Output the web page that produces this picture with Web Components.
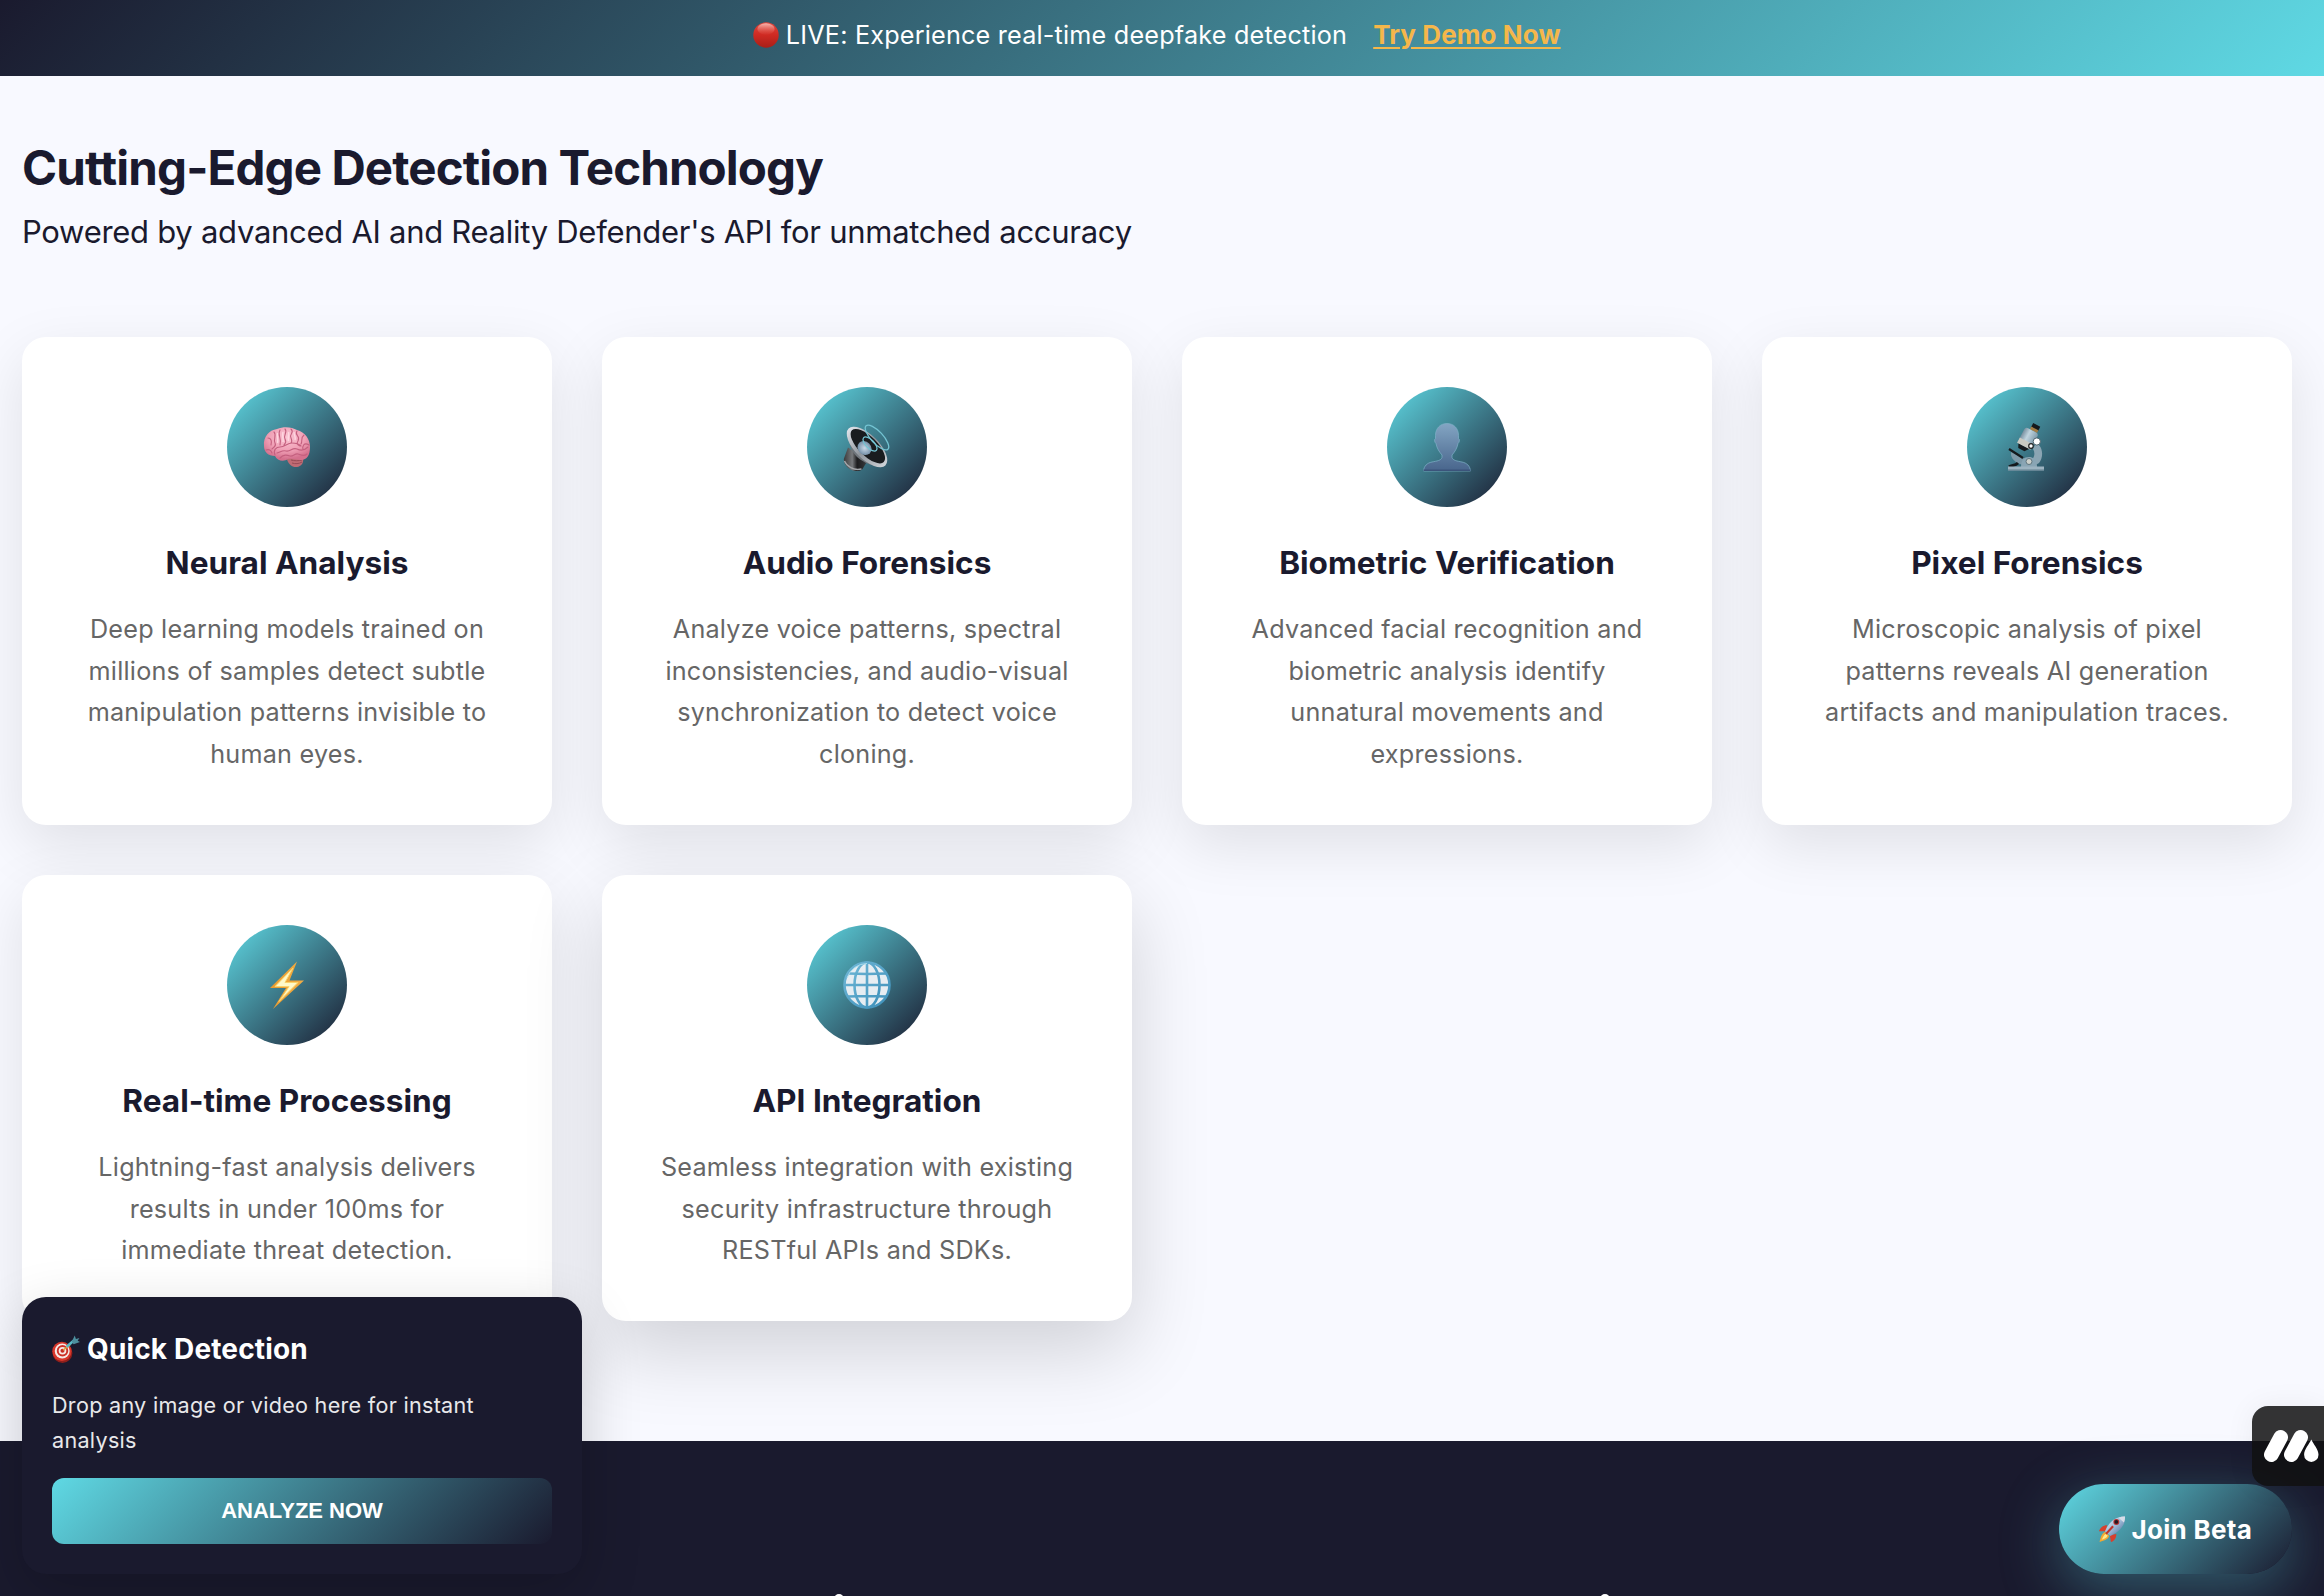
<!DOCTYPE html>
<html lang="en">
<head>
<meta charset="utf-8">
<title>Cutting-Edge Detection Technology</title>
<style>
html,body{margin:0;height:1596px;overflow:hidden}
body{background:#f8f9ff;color:#1a1a2e;font-family:Inter,"Noto Sans",sans-serif;--grad:linear-gradient(135deg,#5fd9e4 0%,#1a1a2e 100%)}
</style>
</head>
<body>
<detect-page></detect-page>
<script>
const ICONS={
dot:`<defs><linearGradient id="a" x2="0" y2="1"><stop stop-color="#e0463c"/><stop offset=".5" stop-color="#cf2a22"/><stop offset="1" stop-color="#a81f18"/></linearGradient><linearGradient id="b" x2="0" y2="1"><stop stop-color="#f6b5ae"/><stop offset="1" stop-color="#e0564c" stop-opacity=".1"/></linearGradient></defs><circle cx="24" cy="24" r="23.5" fill="url(#a)"/><ellipse cx="24" cy="13" rx="16" ry="10.5" fill="url(#b)"/>`,
brain:`<defs><radialGradient id="a" cx=".5" cy=".3" r=".65"><stop stop-color="#fbc6d4"/><stop offset=".6" stop-color="#f0a0b6"/><stop offset="1" stop-color="#d4708d"/></radialGradient></defs><path d="M24 36c1 5 5 8.500 10 8 4-.5 7-4 6-9l-8-3z" fill="#bf6b74"/><path d="M28 37c3 1 8 1 11 0M29 40c3 1 7 1 10-1" stroke="#974b57" fill="none"/><path d="M1 23C0 14 6 7 14 6c7-3 15-2 20 1 8 2 13 9 13 17 0 8-3 13-9 13-5 0-9-2-13-1-4 3-11 2-13-3C5 33 1 29 1 23z" fill="url(#a)"/><g fill="none" stroke="#c4607f" stroke-width="1.100" stroke-linecap="round"><path d="M12 32c-2-5 1-8 5-8 5 0 7-4 12-4 4 0 7 1 9 3M5 15c3 0 4 3 3 7M11 9c3 3-1 7 1 11s-2 4-3 6M17 7c-3 5 2 8 0 15M22 6c3 3-2 6 0 10s0 4-1 6M28 6c4 4-2 4 0 9s0 3 0 5M34 8c-3 5 4 4 1 10-2 3 0 4 2 5M41 12c-4 3-1 6-3 9M46 22c-5-3-7 1-6 5M14 30c4-1 5-3 9-2 5 1 6-4 11-2 4 2 8 1 11-2M17 35c4-4 7-3 10-2s5-3 8-2 6 3 9 0M3 27c3-1 5 0 6 3"/></g><g fill="none" stroke="#ffdce5" stroke-width="1.400" opacity=".85"><path d="M14.500 10c-1 3 1 6 0 10M20 9c-1 3 .5 6 0 10M25.500 9c1 4-1 5 0 9M31 9c0 4 2 4 1 8"/></g>`,
audio:`<defs><linearGradient id="a"><stop stop-color="#3a3a3a"/><stop offset=".35" stop-color="#77797c"/><stop offset=".55" stop-color="#1c1c1e"/><stop offset="1" stop-color="#3b3d40"/></linearGradient><linearGradient id="b"><stop stop-color="#dfe3ea"/><stop offset=".5" stop-color="#8e949b"/><stop offset="1" stop-color="#cfd3d8"/></linearGradient><radialGradient id="c"><stop stop-color="#c9d9e8"/><stop offset="1" stop-color="#7590a8"/></radialGradient></defs><path d="M5 24.500 .8 36c0 5 4 10 9 11.500 4 1.200 8 .5 9.700-1.500L25 37z" fill="url(#a)"/><path d="M1.500 38c2 5 9 10 17 8" stroke="#a3a6aa" stroke-width="1.400" fill="none"/><path d="M6 14c0 8 3 15 8 20 5 4 11 8 20 9z" fill="#6f757b"/><g transform="rotate(45 24 24)"><ellipse cx="24" cy="24" rx="26" ry="12" fill="url(#b)"/><ellipse cx="24" cy="22.800" rx="22.500" ry="9.400" fill="#191c1f"/><ellipse cx="23" cy="26.500" rx="7.500" ry="6.500" fill="url(#c)"/></g><g fill="none" stroke="#74c4d3" stroke-width="1.300"><ellipse cx="27" cy="21" rx="9" ry="4.200" transform="rotate(45 27 21)"/><ellipse cx="34" cy="14.500" rx="16" ry="6" transform="rotate(47 34 14.500)"/></g>`,
user:`<defs><linearGradient id="a" x2="0" y2="1"><stop stop-color="#83a5c3"/><stop offset="1" stop-color="#48658c"/></linearGradient></defs><path d="M24 .5c-7 0-11.500 5-11.500 12v3c-1.500.5-1 4 .5 5 1 5 3 8 6 11.500v2.500c-1 3-5 3.500-10 4.500-5 1-8 4-8.500 9h47c-.5-5-3.500-8-8.500-9-5-1-9-1.500-10-4.500V32c3-3.500 5-6.500 6-11.500 1.500-1 2-4.500.5-5v-3C35.500 5.500 31 .5 24 .5z" fill="url(#a)" stroke="#7fb1c9" stroke-width=".7"/><path d="M.5 47.300h47" stroke="#3b547b" stroke-width="1.400"/>`,
scope:`<defs><linearGradient id="a"><stop stop-color="#7890a0"/><stop offset=".4" stop-color="#c0d4df"/><stop offset="1" stop-color="#7f9bab"/></linearGradient></defs><path d="M33 20c7 3 8 14 3 20l-7 4-4-5c6-2 8-8 5-13z" fill="#8ba5b3"/><path d="M8 29l16 8-3 5C14 41 9 37 8 32z" fill="#7e9aa9"/><path d="M6 26l14 9" stroke="#15191c" stroke-width="2.200"/><path d="M6 44c3-2 6-1 9-4" stroke="#15191c" stroke-width="3" fill="none"/><path d="M18 44c0-7 3-10 8-10s8 4 8 10z" fill="#89a5b4"/><circle cx="26" cy="38.500" r="3" fill="#ccd0cb" stroke="#5f757e"/><path d="M5 43.500h36v4H5z" fill="#9db4c1"/><path d="M5 47h36" stroke="#62808f"/><g transform="rotate(28 24 16)"><path d="M22-1h8v5h-8z" fill="#15191c"/><path d="M22 3h8v3h-8z" fill="#a37d45"/><rect x="17" y="6" width="15" height="18" rx="3" fill="url(#a)"/><path d="M17 18h15v6h-15z" fill="#c8c9c1"/><path d="M18.500 24h12l-3 4h-7z" fill="#15191c"/></g><circle cx="33.800" cy="18.500" r="3.600" fill="#fff" stroke="#51656f"/><circle cx="28" cy="23" r="2.300" fill="#fff" stroke="#222" stroke-width="1.200"/>`,
bolt:`<defs><linearGradient id="a"><stop stop-color="#e89a2e"/><stop offset="1" stop-color="#f2ad45"/></linearGradient></defs><path d="M34 .5 7 27h16L10 48l31-28.500H26.500z" fill="url(#a)"/><path d="M30 7 12 25.500h14L16 40.500 35 21.500H22z" fill="#fff9c9" stroke="#f9d46b" stroke-width="1"/>`,
globe:`<defs><linearGradient id="a" x2="1" y2="1"><stop stop-color="#6fb7d6"/><stop offset="1" stop-color="#3d8fb9"/></linearGradient></defs><circle cx="24" cy="24" r="22.700" fill="#e6edf2"/><g fill="none" stroke="url(#a)" stroke-width="2.600"><circle cx="24" cy="24" r="22.500"/><ellipse cx="24" cy="24" rx="12.500" ry="22.500"/><path d="M24.010 1 24 47M1 24.010 47 24M5 12.500c12 .6 26 .6 38 0M5 35.500c12-.6 26-.6 38 0"/></g><path d="M4 17A21 21 0 0 1 24 2.500" stroke="#a9dcec" stroke-width="1" fill="none"/>`,
target:`<circle cx="18" cy="31" r="17" fill="#8e1f1b"/><circle cx="17" cy="28" r="16.500" fill="#d7372c"/><circle cx="17.500" cy="27.500" r="12.800" fill="#f6e9e6"/><circle cx="18" cy="27" r="9.800" fill="#cc3026"/><circle cx="18" cy="27" r="6.500" fill="#f6e9e6"/><circle cx="18" cy="27" r="3.500" fill="#c62a22"/><path d="M19 26 31 17" stroke="#d9a441" stroke-width="2.500"/><path d="m25 20 12-10" stroke="#58b8c6" stroke-width="4.500"/><path d="m34 11 5-10 2 6 6-2-3 5 4 2-11 4z" fill="#4d8f9e"/>`,
rocket:`<defs><linearGradient id="a" x2="1" y2="1"><stop stop-color="#eef4fa"/><stop offset=".5" stop-color="#9db9d6"/><stop offset="1" stop-color="#3e5f8b"/></linearGradient></defs><path d="M15 17C7 17 2 22 0 28l13 0zM32 33c0 8-4 13-10 15l-2-13z" fill="#d8402d"/><path d="M11 29C4 33 3 41 1 48c7-2 15-4 18-11z" fill="#f3a832"/><path d="M12 33c-4 3-5 7-7 11 5-2 9-3 11-8z" fill="#fdea8b"/><path d="M48 1C32 0 19 10 11 28l10 9C38 29 49 17 48 1z" fill="url(#a)"/><path d="M48 1c-4-.2-8 .3-12 2l10 9c1.600-4 2.200-7 2-11z" fill="#d6dde8"/><circle cx="32" cy="11" r="5.500" fill="#b83232"/><circle cx="32" cy="11" r="3.500" fill="#241a22"/><path d="m13 33 13-14" stroke="#c0352b" stroke-width="4"/>`
};
function define(name,html){
  const t=document.createElement('template');t.innerHTML=html;
  customElements.define(name,class extends HTMLElement{
    connectedCallback(){ if(!this.shadowRoot) this.attachShadow({mode:'open'}).append(t.content.cloneNode(true)); }
  });
}
customElements.define('emoji-icon',class extends HTMLElement{
  connectedCallback(){
    if(this.shadowRoot) return;
    const s=this.getAttribute('size')||48;
    this.attachShadow({mode:'open'}).innerHTML=`<style>:host{display:block;flex:none;width:${s}px;height:${s}px}svg{display:block;width:100%;height:100%;overflow:visible}</style><svg viewBox="0 0 48 48" aria-hidden="true">${ICONS[this.getAttribute('name')]}</svg>`;
  }
});
define('live-banner',`<style>
:host{display:flex;justify-content:center;box-sizing:border-box;height:76px;padding:14px 10px 0 0;background:linear-gradient(135deg,#1a1a2e 0%,#5fd9e4 100%);color:#fff;font-size:25.200px;line-height:42.600px;letter-spacing:.2px;white-space:nowrap}
.row{display:flex;align-items:center;height:42px}
emoji-icon{margin-right:6.500px}
a{margin-left:26px;color:#f5b74a;font-size:26px;letter-spacing:.1px;font-weight:700;text-decoration:underline;text-decoration-thickness:2px;text-underline-offset:3px}
</style><div class="row"><emoji-icon name="dot" size="26"></emoji-icon><span>LIVE: Experience real-time deepfake detection</span><a href="#">Try Demo Now</a></div>`);
define('section-head',`<style>
:host{display:block;white-space:nowrap}
h2{margin:0;font-size:47.500px;line-height:61px;font-weight:700;letter-spacing:-.88px}
p{margin:8px 0 0;font-size:31px;line-height:51px;letter-spacing:-.28px}
</style><h2><slot name="title"></slot></h2><p><slot></slot></p>`);
customElements.define('feature-card',class extends HTMLElement{
  connectedCallback(){
    if(this.shadowRoot) return;
    this.attachShadow({mode:'open'}).innerHTML=`<style>
:host{display:flex;flex-direction:column;align-items:center;box-sizing:border-box;padding:50px 30px 49.600px;background:#fff;border-radius:24px;box-shadow:0 20px 60px rgba(0,0,0,.1);text-align:center;white-space:nowrap}
:host([raised]){box-shadow:0 30px 80px rgba(0,0,0,.16)}
.disc{display:flex;align-items:center;justify-content:center;width:120px;height:120px;border-radius:50%;background:var(--grad)}
h3{margin:30px 0 20.800px;font-size:31.600px;line-height:51.200px;font-weight:700}
p{margin:0;font-size:25.200px;line-height:41.600px;letter-spacing:.22px;color:#666}
</style><div class="disc"><emoji-icon name="${this.getAttribute('icon')}"></emoji-icon></div><h3>${this.getAttribute('heading')}</h3><p><slot></slot></p>`;
  }
});
define('quick-detect',`<style>
:host{display:block;box-sizing:border-box;width:560px;height:277px;padding:30px;border-radius:24px;background:#1a1a2e;color:#fff;box-shadow:0 20px 60px rgba(0,0,0,.2);white-space:nowrap}
h4{display:flex;align-items:center;gap:7px;margin:0 0 16px;font-size:28px;line-height:44.800px;letter-spacing:.15px;font-weight:700}
p{margin:0 0 20px;font-size:21.600px;line-height:35.200px;letter-spacing:.28px;color:#e8e8ea}
button{display:block;width:500px;height:66px;border:0;border-radius:12px;padding:0;background:var(--grad);color:#fff;font:bold 22px "Liberation Sans",Arial,sans-serif}
</style><h4><emoji-icon name="target" size="28"></emoji-icon>Quick Detection</h4><p>Drop any image or video here for instant<br>analysis</p><button>ANALYZE NOW</button>`);
define('beta-button',`<style>
:host{display:flex;align-items:center;gap:6.500px;box-sizing:border-box;width:233px;height:90px;padding:0 40px;border-radius:50px;background:var(--grad);color:#fff;font-size:26px;letter-spacing:.3px;font-weight:700;white-space:nowrap;box-shadow:0 16px 60px rgba(95,217,228,.34)}
</style><emoji-icon name="rocket" size="26"></emoji-icon><span>Join Beta</span>`);
define('side-badge',`<style>
:host{display:block;width:72px;height:80px;border-radius:16px 0 0 16px;background:rgba(17,17,17,.85);box-shadow:0 0 30px rgba(0,0,0,.06)}
svg{display:block}
</style><svg width="72" height="80" viewBox="0 0 72 80" fill="#fff"><path d="M19.300 48.700 28.700 31.300M39.300 48.700 48.700 31.300" stroke="#fff" stroke-width="14.600" stroke-linecap="round"/><path d="M59.300 33.500c2 4.500 7.200 10 7.200 15.200a7.200 7.200 0 0 1-14.400 0c0-5.200 5.200-10.700 7.200-15.200z"/></svg>`);
define('page-footer',`<style>
:host{display:block;height:155px;overflow:hidden;background:#1a1a2e}
.tips{display:flex;padding:153px 0 0 833.500px;gap:756px}
i{width:10px;height:10px;flex:none;border-radius:50%;background:#fff}
</style><div class="tips"><i></i><i></i></div>`);
define('detect-page',`<style>
:host{display:flex;flex-direction:column;height:1596px;position:relative;overflow:hidden}
main{height:1365px;box-sizing:border-box;padding:61px 32px 0 22px}
.grid{display:grid;grid-template-columns:repeat(4,530px);gap:50px;margin-top:80px}
quick-detect{position:absolute;left:22px;top:1297px}
beta-button{position:absolute;left:2059px;top:1484px}
side-badge{position:absolute;right:0;top:1406px}
</style>
<live-banner></live-banner>
<main>
<section-head><span slot="title">Cutting-Edge Detection Technology</span>Powered by advanced AI and Reality Defender's API for unmatched accuracy</section-head>
<div class="grid">
<feature-card icon="brain" heading="Neural Analysis">Deep learning models trained on<br>millions of samples detect subtle<br>manipulation patterns invisible to<br>human eyes.</feature-card>
<feature-card icon="audio" heading="Audio Forensics">Analyze voice patterns, spectral<br>inconsistencies, and audio-visual<br>synchronization to detect voice<br>cloning.</feature-card>
<feature-card icon="user" heading="Biometric Verification">Advanced facial recognition and<br>biometric analysis identify<br>unnatural movements and<br>expressions.</feature-card>
<feature-card icon="scope" heading="Pixel Forensics">Microscopic analysis of pixel<br>patterns reveals AI generation<br>artifacts and manipulation traces.</feature-card>
<feature-card icon="bolt" heading="Real-time Processing">Lightning-fast analysis delivers<br>results in under 100ms for<br>immediate threat detection.</feature-card>
<feature-card icon="globe" heading="API Integration" raised>Seamless integration with existing<br>security infrastructure through<br>RESTful APIs and SDKs.</feature-card>
</div>
</main>
<page-footer></page-footer>
<quick-detect></quick-detect>
<beta-button></beta-button>
<side-badge></side-badge>`);
</script>
</body>
</html>
